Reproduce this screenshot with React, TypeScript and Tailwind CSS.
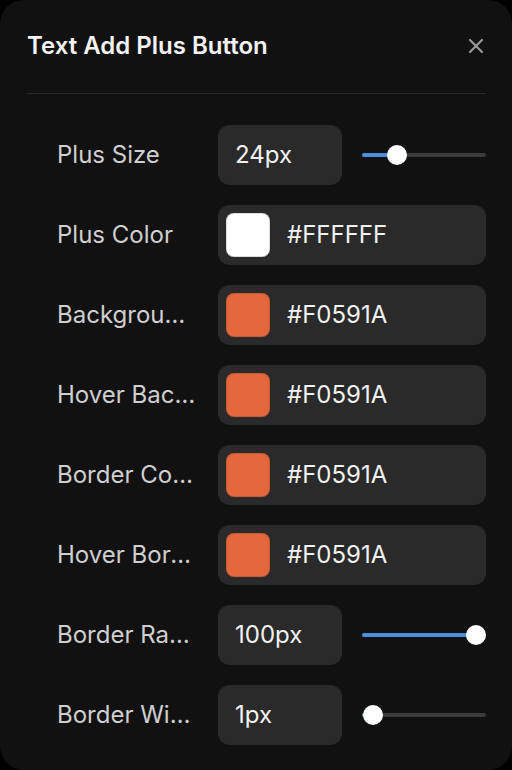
import { useState } from "react";

type Row =
  | { kind: "slider"; label: string; value: number; max: number; unit: string }
  | { kind: "color"; label: string; color: string; swatch: string };

const rows: Row[] = [
  { kind: "slider", label: "Plus Size", value: 24, max: 100, unit: "px" },
  { kind: "color", label: "Plus Color", color: "#FFFFFF", swatch: "#ffffff" },
  { kind: "color", label: "Background Color", color: "#F0591A", swatch: "#e3673a" },
  { kind: "color", label: "Hover Background Color", color: "#F0591A", swatch: "#e3673a" },
  { kind: "color", label: "Border Color", color: "#F0591A", swatch: "#e3673a" },
  { kind: "color", label: "Hover Border Color", color: "#F0591A", swatch: "#e3673a" },
  { kind: "slider", label: "Border Radius", value: 100, max: 100, unit: "px" },
  { kind: "slider", label: "Border Width", value: 1, max: 100, unit: "px" },
];

function Slider({ value, max }: { value: number; max: number }) {
  const pct = (value / max) * 100;
  return (
    <div className="relative flex-1 h-5 flex items-center">
      <div className="w-full h-1 rounded-full bg-[#3b3b3b]" />
      <div className="absolute inset-x-[10px] h-5">
        <div
          className="absolute left-[-10px] top-[8px] h-1 rounded-full bg-[#4a8fdf]"
          style={{ width: `calc(${pct}% + 10px)` }}
        />
        <div
          className="absolute top-0 w-5 h-5 -ml-[10px] rounded-full bg-white"
          style={{ left: `${pct}%` }}
        />
      </div>
    </div>
  );
}

export default function App() {
  const [items] = useState(rows);

  return (
    <div className="w-[512px] h-[770px] bg-black">
      <div
        className="w-full h-full rounded-[24px] bg-[#111111] text-white"
        style={{ fontFamily: "Inter, 'Noto Sans', sans-serif" }}
      >
        <div className="flex items-center justify-between pl-[27px] pr-[28px] pt-[30px]">
          <h1 className="text-[24px] leading-8 font-semibold text-[#f2f2f2]">
            Text Add Plus Button
          </h1>
          <svg width="16" height="16" viewBox="0 0 16 16" className="text-[#9a9a9a]">
            <path d="M2 2L14 14M14 2L2 14" stroke="currentColor" strokeWidth="2.2" strokeLinecap="round" />
          </svg>
        </div>
        <div className="ml-[27px] mr-[26px] mt-[31px] h-px bg-[#2a2a2a]" />
        <div className="flex flex-col gap-5 pl-[57px] pr-[26px] mt-[31px]">
          {items.map((row) => (
            <div key={row.label} className="flex items-center h-[60px]">
              <div className="w-[141px] mr-5 truncate text-[24px] text-[#cfcfcf]">
                {row.label}
              </div>
              {row.kind === "slider" ? (
                <div className="flex flex-1 items-center gap-5">
                  <div className="w-[124px] h-[60px] rounded-[12px] bg-[#2a2a2a] flex items-center pl-[17px] text-[24px] text-[#f2f2f2]">
                    {row.value}
                    {row.unit}
                  </div>
                  <Slider value={row.value} max={row.max} />
                </div>
              ) : (
                <div className="flex flex-1 items-center h-[60px] rounded-[12px] bg-[#2a2a2a] pl-2 gap-[17px]">
                  <div
                    className="w-11 h-11 rounded-[8px] border border-[#00000022]"
                    style={{ backgroundColor: row.swatch }}
                  />
                  <span className="text-[24px] text-[#f2f2f2]">{row.color}</span>
                </div>
              )}
            </div>
          ))}
        </div>
      </div>
    </div>
  );
}
